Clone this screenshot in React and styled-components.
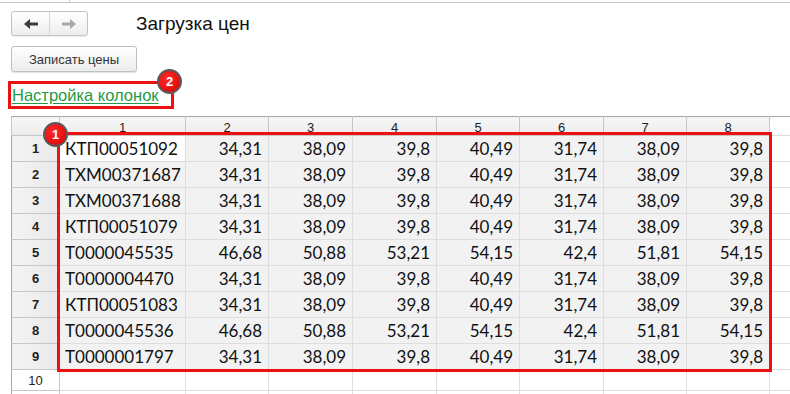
import React from "react";
import styled, { createGlobalStyle } from "styled-components";

const Global = createGlobalStyle`
  html, body { margin: 0; padding: 0; background: #fff; overflow: hidden; }
  body { font-family: Arial, "Liberation Sans", sans-serif; width: 790px; height: 394px; }
`;

const Page = styled.div`
  width: 790px;
  height: 394px;
  overflow: hidden;
  position: relative;
`;

const TopStrip = styled.div`
  height: 2px;
  border-bottom: 1px solid #c4c4c4;
  display: flex;
`;

const TabTick = styled.div`
  width: 69px;
  border-right: 1px solid #c4c4c4;
`;

const HeadRow = styled.div`
  display: flex;
  align-items: center;
  padding: 8px 0 0 11px;
`;

const NavGroup = styled.div`
  display: flex;
  width: 77px;
  height: 25px;
  box-sizing: border-box;
  border: 1px solid #c3c3c3;
  border-radius: 3px;
  background: linear-gradient(#ffffff, #eeeeee);
  box-shadow: 0 1px 1px rgba(0,0,0,0.08);
`;

const NavBtn = styled.div`
  flex: 1;
  display: flex;
  align-items: center;
  justify-content: center;
  & + & { border-left: 1px solid #d4d4d4; }
`;

const Title = styled.div`
  margin-left: 48px;
  font-size: 19px;
  color: #111;
`;

const ButtonRow = styled.div`
  padding: 10px 0 0 11px;
`;

const Button = styled.div`
  display: inline-flex;
  align-items: center;
  justify-content: center;
  width: 126px;
  height: 26px;
  box-sizing: border-box;
  border: 1px solid #c0c0c0;
  border-radius: 3px;
  background: linear-gradient(#ffffff, #ececec);
  box-shadow: 0 1px 1px rgba(0,0,0,0.12);
  font-size: 13px;
  color: #333;
`;

const LinkRow = styled.div`
  padding: 9px 0 0 8px;
  height: 28px;
  position: relative;
`;

const Highlight = styled.div`
  display: inline-flex;
  align-items: center;
  width: 166px;
  height: 28px;
  box-sizing: border-box;
  border: 3px solid #ee1111;
  padding-left: 1px;
  position: relative;
`;

const Link = styled.span`
  color: #1f9a45;
  font-size: 16.5px;
  text-decoration: underline;
  text-underline-offset: 2px;
  white-space: nowrap;
`;

const Badge = styled.div`
  position: absolute;
  width: 25px;
  height: 25px;
  box-sizing: border-box;
  border-radius: 50%;
  background: radial-gradient(circle at 40% 35%, #ff2a2a, #d80000);
  border: 2px solid #5a5a5a;
  color: #fff;
  font-weight: bold;
  font-size: 13px;
  display: flex;
  align-items: center;
  justify-content: center;
  left: ${p => p.$x}px;
  top: ${p => p.$y}px;
  z-index: 3;
`;

const TableWrap = styled.div`
  margin: 7px 0 0 11px;
  position: relative;
`;

const Grid = styled.table`
  border-collapse: collapse;
  table-layout: fixed;
  width: 779px;
  font-family: Lato, "Open Sans", sans-serif;
`;

const HeadCell = styled.th`
  height: 18px;
  padding: 0;
  font-family: Arial, "Liberation Sans", sans-serif;
  font-weight: normal;
  font-size: 13px;
  color: #222;
  text-align: center;
  vertical-align: bottom;
  line-height: 15px;
  border: 1px solid #c6c6c6;
  border-top-color: #a8a8a8;
  background: ${p => (p.$blank ? "#fff" : "linear-gradient(#f7f7f7, #ececec)")};
  ${p => p.$blank && "border-right: none; border-bottom-color: #dcdcdc;"}
`;

const RowHead = styled.td`
  height: ${p => p.$h}px;
  padding: 0;
  text-align: center;
  font-family: Arial, "Liberation Sans", sans-serif;
  font-size: 13px;
  font-weight: ${p => (p.$bold ? "bold" : "normal")};
  color: #222;
  border: 1px solid #c6c6c6;
  border-left-color: #a8a8a8;
  background: ${p => (p.$bold ? "linear-gradient(90deg, #f3f3f3, #e9e9e9)" : "#fff")};
`;

const Cell = styled.td`
  height: ${p => p.$h}px;
  padding: ${p => (p.$left ? "0 0 0 5px" : "0 6px 0 0")};
  text-align: ${p => (p.$left ? "left" : "right")};
  font-size: 17px;
  color: #111;
  white-space: nowrap;
  overflow: hidden;
  border: 1px solid #dedede;
  background: ${p => (p.$white ? "#fff" : "#f2f2f2")};
  ${p => p.$dashRight && "border-right: 1px dashed #8a8a8a;"}
  ${p => p.$dashBottom && "border-bottom: 1px dashed #8a8a8a;"}
  ${p => p.$noRight && "border-right: none;"}
`;

const Frame = styled.div`
  position: absolute;
  left: 46px;
  top: 16px;
  width: 715px;
  height: 240px;
  box-sizing: border-box;
  border: 3px solid #ee1111;
  pointer-events: none;
  z-index: 2;
`;

const widths = [48, 126, 83, 84, 84, 83, 84, 83, 83, 21];

const rows = [
  ["КТП00051092", "34,31", "38,09", "39,8", "40,49", "31,74", "38,09", "39,8"],
  ["ТХМ00371687", "34,31", "38,09", "39,8", "40,49", "31,74", "38,09", "39,8"],
  ["ТХМ00371688", "34,31", "38,09", "39,8", "40,49", "31,74", "38,09", "39,8"],
  ["КТП00051079", "34,31", "38,09", "39,8", "40,49", "31,74", "38,09", "39,8"],
  ["Т0000045535", "46,68", "50,88", "53,21", "54,15", "42,4", "51,81", "54,15"],
  ["Т0000004470", "34,31", "38,09", "39,8", "40,49", "31,74", "38,09", "39,8"],
  ["КТП00051083", "34,31", "38,09", "39,8", "40,49", "31,74", "38,09", "39,8"],
  ["Т0000045536", "46,68", "50,88", "53,21", "54,15", "42,4", "51,81", "54,15"],
  ["Т0000001797", "34,31", "38,09", "39,8", "40,49", "31,74", "38,09", "39,8"],
];

const Arrow = ({ dir, color }) => (
  <svg width="16" height="12" viewBox="0 0 16 12">
    {dir === "left" ? (
      <path d="M1 6 L7 1 V4.5 H15 V7.5 H7 V11 Z" fill={color} />
    ) : (
      <path d="M15 6 L9 1 V4.5 H1 V7.5 H9 V11 Z" fill={color} />
    )}
  </svg>
);

const App = () => {
  return (
    <Page>
      <Global />
      <TopStrip>
        <TabTick />
      </TopStrip>
      <HeadRow>
        <NavGroup>
          <NavBtn><Arrow dir="left" color="#3c3c3c" /></NavBtn>
          <NavBtn><Arrow dir="right" color="#a8a8a8" /></NavBtn>
        </NavGroup>
        <Title>Загрузка цен</Title>
      </HeadRow>
      <ButtonRow>
        <Button>Записать цены</Button>
      </ButtonRow>
      <LinkRow>
        <Highlight>
          <Link>Настройка колонок</Link>
        </Highlight>
        <Badge $x={157} $y={-3}>2</Badge>
      </LinkRow>
      <TableWrap>
        <Grid>
          <colgroup>
            {widths.map((w, i) => <col key={i} style={{ width: w }} />)}
          </colgroup>
          <thead>
            <tr>
              <HeadCell />
              {[1, 2, 3, 4, 5, 6, 7, 8].map(n => <HeadCell key={n}>{n}</HeadCell>)}
              <HeadCell $blank />
            </tr>
          </thead>
          <tbody>
            {rows.map((r, i) => (
              <tr key={i}>
                <RowHead $h={25} $bold>{i + 1}</RowHead>
                {r.map((v, j) => (
                  <Cell key={j} $h={25} $left={j === 0} $white={i === 0 && j === 0}>{v}</Cell>
                ))}
                <Cell $h={25} $white $noRight $dashBottom={i === 8} />
              </tr>
            ))}
            {[10, 11].map(n => (
              <tr key={n}>
                <RowHead $h={20}>{n}</RowHead>
                {widths.slice(1).map((_, j) => (
                  <Cell key={j} $h={20} $white $dashRight={j === 7} $noRight={j === 8} />
                ))}
              </tr>
            ))}
          </tbody>
        </Grid>
        <Frame />
        <Badge $x={32} $y={6}>1</Badge>
      </TableWrap>
    </Page>
  );
};

export default App;
